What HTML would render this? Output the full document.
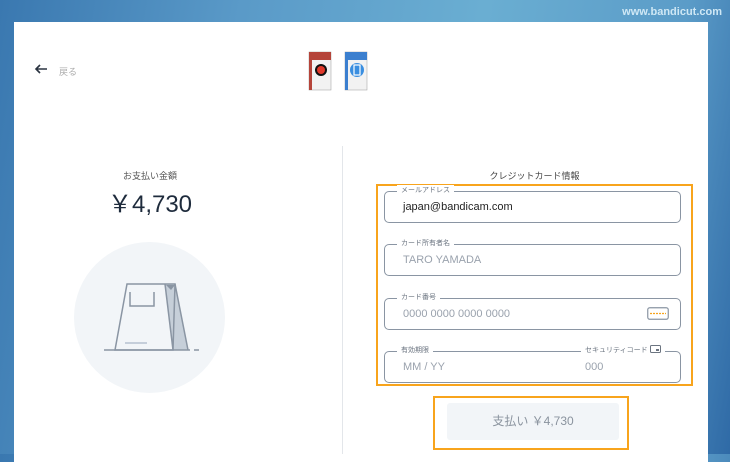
<!DOCTYPE html>
<html><head><meta charset="utf-8"><style>
*{margin:0;padding:0;box-sizing:border-box}
body{width:730px;height:454px;overflow:hidden;position:relative;font-family:"Liberation Sans","Noto Sans CJK JP",sans-serif;background:linear-gradient(100deg,#3a78b0 0%,#5a9ac8 30%,#6aaed2 60%,#5b9cc8 85%,#2f6aa6 100%)}
.url{position:absolute;right:8px;top:6px;color:#cfe8f5;font-size:11px;font-weight:bold}
.panel{position:absolute;left:14px;top:22px;width:694px;height:440px;background:#fff}
.a{position:absolute}
.field{position:absolute;left:384px;width:297px;height:32px;border:1.5px solid #8a95a3;border-radius:5px}
.lab{position:absolute;top:-7px;left:12px;background:#fff;padding:0 4px;font-size:7px;color:#6b7480;line-height:12px}
.val{position:absolute;left:18px;top:9px;font-size:11px;color:#9aa2ad}
</style></head><body>
<div class="url">www.bandicut.com</div>
<div class="panel"></div>
<svg class="a" style="left:34px;top:64px" width="14" height="10"><path d="M13 5H2M6 1L2 5L6 9" fill="none" stroke="#2a3340" stroke-width="1.6"/></svg>
<div class="a" style="left:59px;top:65px;font-size:9px;color:#aaa">戻る</div>
<svg class="a" style="left:307px;top:50px" width="70" height="42">
<rect x="2" y="2" width="22" height="38" fill="#f2f2f2" stroke="#999" stroke-width=".5"/><rect x="2" y="2" width="22" height="8" fill="#b5443a"/><rect x="2" y="2" width="3" height="38" fill="#b5443a"/><circle cx="14" cy="20" r="6" fill="#111"/><circle cx="14" cy="20" r="4" fill="#e0392b"/>
<rect x="38" y="2" width="22" height="38" fill="#f2f2f2" stroke="#999" stroke-width=".5"/><rect x="38" y="2" width="22" height="8" fill="#3b7fcf"/><rect x="38" y="2" width="3" height="38" fill="#3b7fcf"/><circle cx="50" cy="20" r="7" fill="#3a8ee0"/><rect x="47" y="15" width="6" height="10" fill="none" stroke="#fff" stroke-width="1.2"/>
</svg>
<div class="a" style="left:342px;top:146px;width:1px;height:308px;background:#e3e6ea"></div>
<div class="a" style="left:60px;top:169px;width:180px;text-align:center;font-size:9px;color:#555">お支払い金額</div>
<div class="a" style="left:60px;top:184px;width:180px;text-align:center;font-size:24px;color:#1e2b3c">￥4,730</div>
<div class="a" style="left:74px;top:242px;width:151px;height:151px;border-radius:50%;background:#f2f5f8"></div>
<svg class="a" style="left:100px;top:280px" width="100" height="75">
<polygon points="65,4 75,4 88,70 73,70" fill="#c6cfd9"/>
<polygon points="27,4 75,4 73,70 15,70" fill="none" stroke="#8a95a3" stroke-width="1.5"/>
<line x1="65" y1="4" x2="73" y2="70" stroke="#8a95a3" stroke-width="1.5"/>
<line x1="75" y1="4" x2="88" y2="70" stroke="#8a95a3" stroke-width="1.5"/>
<path d="M30 12 V26 H54 V12" fill="none" stroke="#8a95a3" stroke-width="1.5"/>
<path d="M66 5 L71 10 L75 5" fill="#8a95a3"/>
<line x1="25" y1="63" x2="47" y2="63" stroke="#b6c2cf" stroke-width="1.5"/>
<line x1="4" y1="70" x2="90" y2="70" stroke="#8a95a3" stroke-width="1.5"/>
<line x1="94" y1="70" x2="99" y2="70" stroke="#8a95a3" stroke-width="1.5"/>
</svg>
<div class="a" style="left:376px;top:169px;width:317px;text-align:center;font-size:9px;color:#444">クレジットカード情報</div>
<div class="a" style="left:376px;top:184px;width:317px;height:202px;border:2px solid #f8a41c"></div>
<div class="field" style="top:191px"><span class="lab">メールアドレス</span><span class="val" style="color:#222">japan@bandicam.com</span></div>
<div class="field" style="top:244px"><span class="lab">カード所有者名</span><span class="val">TARO YAMADA</span></div>
<div class="field" style="top:298px"><span class="lab">カード番号</span><span class="val">0000 0000 0000 0000</span>
<svg class="a" style="right:11px;top:8px" width="22" height="13"><rect x=".75" y=".75" width="20.5" height="11.5" rx="2" fill="none" stroke="#8a95a3" stroke-width="1.2"/><line x1="3" y1="6.5" x2="19" y2="6.5" stroke="#f8a41c" stroke-width="1.2" stroke-dasharray="2 1"/></svg></div>
<div class="field" style="top:351px"><span class="lab">有効期限</span><span class="lab" style="left:196px">セキュリティコード <svg width="11" height="8" style="vertical-align:-1px"><rect x=".5" y=".5" width="10" height="7" rx="1" fill="none" stroke="#6b7480"/><rect x="6" y="4" width="3" height="2" fill="#6b7480"/></svg></span><span class="val">MM / YY</span><span class="val" style="left:200px">000</span></div>
<div class="a" style="left:433px;top:396px;width:196px;height:54px;border:2px solid #f8a41c"></div>
<div class="a" style="left:447px;top:403px;width:172px;height:37px;background:#f2f5f8;border-radius:3px;text-align:center;line-height:37px;font-size:12px;color:#8a939e">支払い ￥4,730</div>
</body></html>
